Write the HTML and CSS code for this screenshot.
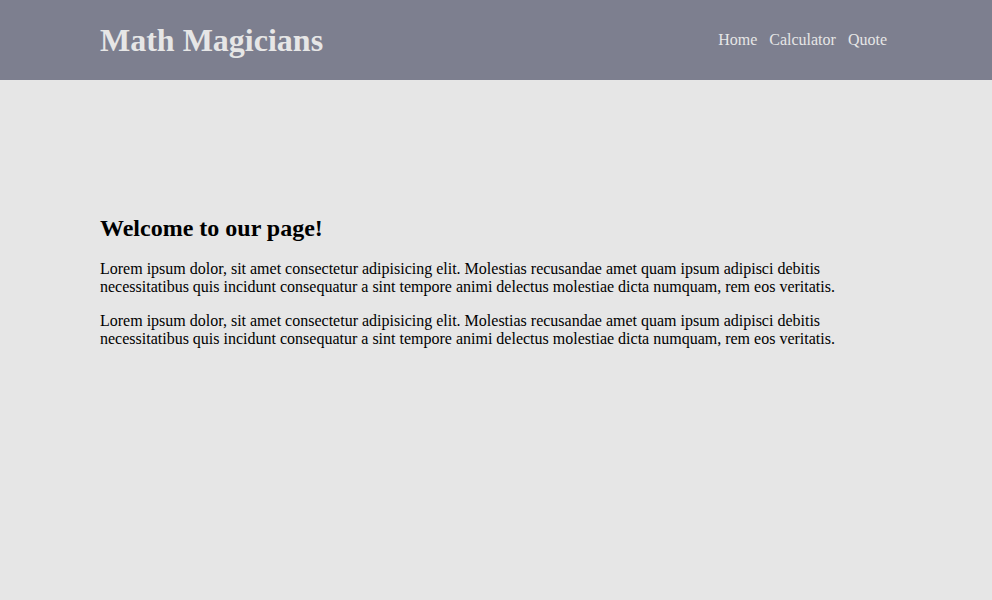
FILE: index.html
```html
<!DOCTYPE html>
<html>
<head>
<meta charset="utf-8">
<link rel="stylesheet" href="styles.css">
</head>
<body>
<header class="header">
  <h1 class="logo">Math Magicians</h1>
  <nav class="nav">
    <a class="nav-link" href="#">Home</a>
    <a class="nav-link" href="#">Calculator</a>
    <a class="nav-link" href="#">Quote</a>
  </nav>
</header>
<main class="main">
  <h2 class="title">Welcome to our page!</h2>
  <p class="text">Lorem ipsum dolor, sit amet consectetur adipisicing elit. Molestias recusandae amet quam ipsum adipisci debitis necessitatibus quis incidunt consequatur a sint tempore animi delectus molestiae dicta numquam, rem eos veritatis.</p>
  <p class="text">Lorem ipsum dolor, sit amet consectetur adipisicing elit. Molestias recusandae amet quam ipsum adipisci debitis necessitatibus quis incidunt consequatur a sint tempore animi delectus molestiae dicta numquam, rem eos veritatis.</p>
</main>
</body>
</html>
```
FILE: styles.css
```css
html, body {
  margin: 0;
  padding: 0;
}
body {
  background: #e6e6e6;
  font-family: "Liberation Serif", "Times New Roman", serif;
  font-size: 16px;
  color: #000;
  min-height: 600px;
}
.header {
  height: 80px;
  background: #7d7f8f;
  display: flex;
  align-items: center;
  justify-content: space-between;
  padding: 0 105px 0 100px;
}
.logo {
  margin: 0;
  font-size: 32px;
  font-weight: bold;
  color: #e6e6e6;
}
.nav {
  display: flex;
  gap: 12px;
}
.nav-link {
  color: #e6e6e6;
  text-decoration: none;
  font-size: 16px;
}
.main {
  padding: 113px 100px 0 100px;
}
.title {
  font-size: 24px;
  margin: 22px 0 18px;
}
.text {
  margin: 16px 0;
  max-width: 760px;
}
```
